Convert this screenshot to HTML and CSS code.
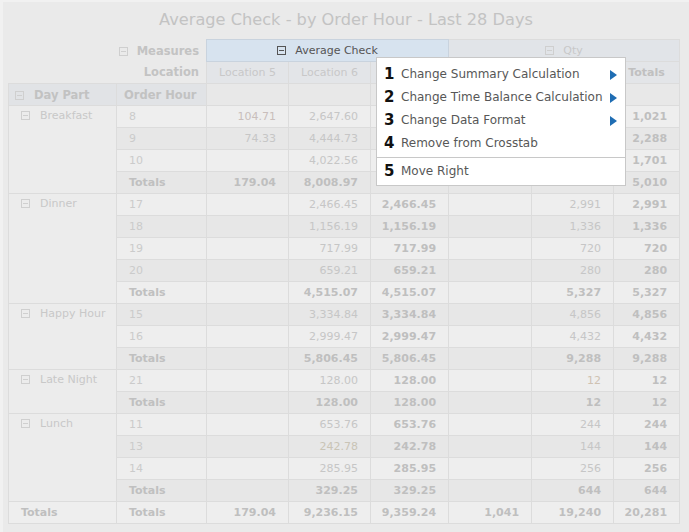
FILE: index.html
```html
<!DOCTYPE html>
<html>
<head>
<meta charset="utf-8">
<link rel="stylesheet" href="styles.css">
</head>
<body>
<div class="page">
  <div class="title">Average Check - by Order Hour - Last 28 Days</div>
  <table class="xt">
    <colgroup>
      <col class="c1"><col class="c2"><col class="c3"><col class="c4"><col class="c5"><col class="c6"><col class="c7"><col class="c8">
    </colgroup>
    <thead>
      <tr>
        <td colspan="2" class="axis"><span class="tog"><svg width="9" height="9" viewBox="0 0 9 9"><rect x="0.5" y="0.5" width="8" height="8" fill="none" stroke="currentColor"/><line x1="2" y1="4.5" x2="7" y2="4.5" stroke="currentColor"/></svg></span>Measures</td>
        <td colspan="3" class="m-avg"><span class="tog"><svg width="9" height="9" viewBox="0 0 9 9"><rect x="0.5" y="0.5" width="8" height="8" fill="none" stroke="currentColor"/><line x1="2" y1="4.5" x2="7" y2="4.5" stroke="currentColor"/></svg></span>Average Check</td>
        <td colspan="3" class="m-qty"><span class="tog"><svg width="9" height="9" viewBox="0 0 9 9"><rect x="0.5" y="0.5" width="8" height="8" fill="none" stroke="currentColor"/><line x1="2" y1="4.5" x2="7" y2="4.5" stroke="currentColor"/></svg></span>Qty</td>
      </tr>
      <tr>
        <td colspan="2" class="axis">Location</td>
        <td class="loc">Location 5</td>
        <td class="loc">Location 6</td>
        <td class="loc b"></td>
        <td class="loc"></td>
        <td class="loc"></td>
        <td class="loc b">Totals</td>
      </tr>
      <tr class="dimrow">
        <td class="dimh"><span class="tog"><svg width="9" height="9" viewBox="0 0 9 9"><rect x="0.5" y="0.5" width="8" height="8" fill="none" stroke="currentColor"/><line x1="2" y1="4.5" x2="7" y2="4.5" stroke="currentColor"/></svg></span>Day Part</td>
        <td class="dimh oh">Order Hour</td>
        <td></td><td></td><td></td><td></td><td></td><td></td>
      </tr>
    </thead>
    <tbody>
      <tr>
        <td rowspan="4" class="grp"><span class="tog"><svg width="9" height="9" viewBox="0 0 9 9"><rect x="0.5" y="0.5" width="8" height="8" fill="none" stroke="currentColor"/><line x1="2" y1="4.5" x2="7" y2="4.5" stroke="currentColor"/></svg></span>Breakfast</td>
        <td class="hr">8</td><td class="n warm">104.71</td><td class="n">2,647.60</td><td class="n b"></td><td class="n"></td><td class="n"></td><td class="n b">1,021</td>
      </tr>
      <tr><td class="hr">9</td><td class="n">74.33</td><td class="n">4,444.73</td><td class="n b"></td><td class="n"></td><td class="n"></td><td class="n b">2,288</td></tr>
      <tr><td class="hr">10</td><td class="n"></td><td class="n">4,022.56</td><td class="n b"></td><td class="n"></td><td class="n"></td><td class="n b">1,701</td></tr>
      <tr><td class="hr b">Totals</td><td class="n b">179.04</td><td class="n b">8,008.97</td><td class="n b"></td><td class="n b"></td><td class="n b"></td><td class="n b">5,010</td></tr>

      <tr>
        <td rowspan="5" class="grp"><span class="tog"><svg width="9" height="9" viewBox="0 0 9 9"><rect x="0.5" y="0.5" width="8" height="8" fill="none" stroke="currentColor"/><line x1="2" y1="4.5" x2="7" y2="4.5" stroke="currentColor"/></svg></span>Dinner</td>
        <td class="hr">17</td><td class="n"></td><td class="n">2,466.45</td><td class="n b">2,466.45</td><td class="n"></td><td class="n">2,991</td><td class="n b">2,991</td>
      </tr>
      <tr><td class="hr">18</td><td class="n"></td><td class="n">1,156.19</td><td class="n b">1,156.19</td><td class="n"></td><td class="n">1,336</td><td class="n b">1,336</td></tr>
      <tr><td class="hr">19</td><td class="n"></td><td class="n">717.99</td><td class="n b">717.99</td><td class="n"></td><td class="n">720</td><td class="n b">720</td></tr>
      <tr><td class="hr">20</td><td class="n"></td><td class="n">659.21</td><td class="n b">659.21</td><td class="n"></td><td class="n">280</td><td class="n b">280</td></tr>
      <tr><td class="hr b">Totals</td><td class="n"></td><td class="n b">4,515.07</td><td class="n b">4,515.07</td><td class="n"></td><td class="n b">5,327</td><td class="n b">5,327</td></tr>

      <tr>
        <td rowspan="3" class="grp"><span class="tog"><svg width="9" height="9" viewBox="0 0 9 9"><rect x="0.5" y="0.5" width="8" height="8" fill="none" stroke="currentColor"/><line x1="2" y1="4.5" x2="7" y2="4.5" stroke="currentColor"/></svg></span>Happy Hour</td>
        <td class="hr">15</td><td class="n"></td><td class="n">3,334.84</td><td class="n b">3,334.84</td><td class="n"></td><td class="n">4,856</td><td class="n b">4,856</td>
      </tr>
      <tr><td class="hr">16</td><td class="n"></td><td class="n">2,999.47</td><td class="n b">2,999.47</td><td class="n"></td><td class="n">4,432</td><td class="n b">4,432</td></tr>
      <tr><td class="hr b">Totals</td><td class="n"></td><td class="n b">5,806.45</td><td class="n b">5,806.45</td><td class="n"></td><td class="n b">9,288</td><td class="n b">9,288</td></tr>

      <tr>
        <td rowspan="2" class="grp"><span class="tog"><svg width="9" height="9" viewBox="0 0 9 9"><rect x="0.5" y="0.5" width="8" height="8" fill="none" stroke="currentColor"/><line x1="2" y1="4.5" x2="7" y2="4.5" stroke="currentColor"/></svg></span>Late Night</td>
        <td class="hr">21</td><td class="n"></td><td class="n">128.00</td><td class="n b">128.00</td><td class="n"></td><td class="n orange">12</td><td class="n b">12</td>
      </tr>
      <tr><td class="hr b">Totals</td><td class="n"></td><td class="n b">128.00</td><td class="n b">128.00</td><td class="n"></td><td class="n b">12</td><td class="n b">12</td></tr>

      <tr>
        <td rowspan="4" class="grp"><span class="tog"><svg width="9" height="9" viewBox="0 0 9 9"><rect x="0.5" y="0.5" width="8" height="8" fill="none" stroke="currentColor"/><line x1="2" y1="4.5" x2="7" y2="4.5" stroke="currentColor"/></svg></span>Lunch</td>
        <td class="hr">11</td><td class="n"></td><td class="n">653.76</td><td class="n b">653.76</td><td class="n"></td><td class="n">244</td><td class="n b">244</td>
      </tr>
      <tr><td class="hr">13</td><td class="n"></td><td class="n yel">242.78</td><td class="n b">242.78</td><td class="n"></td><td class="n">144</td><td class="n b">144</td></tr>
      <tr><td class="hr">14</td><td class="n"></td><td class="n">285.95</td><td class="n b">285.95</td><td class="n"></td><td class="n">256</td><td class="n b">256</td></tr>
      <tr><td class="hr b">Totals</td><td class="n"></td><td class="n b">329.25</td><td class="n b">329.25</td><td class="n"></td><td class="n b">644</td><td class="n b">644</td></tr>

      <tr class="grand">
        <td class="gt b">Totals</td>
        <td class="hr b">Totals</td><td class="n b">179.04</td><td class="n b">9,236.15</td><td class="n b">9,359.24</td><td class="n b">1,041</td><td class="n b">19,240</td><td class="n b">20,281</td>
      </tr>
    </tbody>
  </table>

  <div class="menu">
    <div class="item"><span class="num">1</span><span class="lbl">Change Summary Calculation</span><svg class="arr" width="7" height="10" viewBox="0 0 7 10"><polygon points="0,0 7,5 0,10" fill="currentColor"/></svg></div>
    <div class="item"><span class="num">2</span><span class="lbl">Change Time Balance Calculation</span><svg class="arr" width="7" height="10" viewBox="0 0 7 10"><polygon points="0,0 7,5 0,10" fill="currentColor"/></svg></div>
    <div class="item"><span class="num">3</span><span class="lbl">Change Data Format</span><svg class="arr" width="7" height="10" viewBox="0 0 7 10"><polygon points="0,0 7,5 0,10" fill="currentColor"/></svg></div>
    <div class="item"><span class="num">4</span><span class="lbl">Remove from Crosstab</span></div>
    <div class="sep"></div>
    <div class="item"><span class="num">5</span><span class="lbl">Move Right</span></div>
  </div>
</div>
</body>
</html>
```
FILE: styles.css
```css
html, body {
  margin: 0;
  padding: 0;
  background: #f1f1f1;
}
.page {
  position: relative;
  width: 686px;
  height: 530px;
  margin: 2px 0 0 3px;
  background: #eaeaea;
  font-family: "DejaVu Sans", Verdana, sans-serif;
  font-size: 11px;
  color: #c6c6c6;
  overflow: hidden;
}
.title {
  height: 37px;
  line-height: 35px;
  text-align: center;
  font-size: 16.2px;
  color: #c3c3c3;
}
.xt {
  border-collapse: collapse;
  table-layout: fixed;
  width: 671px;
  margin-left: 5px;
}
.c1 { width: 108px; }
.c2 { width: 90px; }
.c3 { width: 82px; }
.c4 { width: 82px; }
.c5 { width: 78px; }
.c6 { width: 83px; }
.c7 { width: 82px; }
.c8 { width: 66px; }
.xt td {
  border: 1px solid #dcdcdc;
  padding: 0;
  height: 21px;
  line-height: 20px;
  white-space: nowrap;
  overflow: hidden;
}
.b { font-weight: bold; color: #bfbfbf; }
.tog {
  display: inline-block;
  width: 9px;
  height: 9px;
  margin-right: 10px;
  vertical-align: -1px;
  color: #cfcfcf;
}
.tog svg { display: block; }
.xt td.axis {
  border: none;
  background: transparent;
  text-align: right;
  padding-right: 7px;
  font-weight: bold;
  color: #c3c3c3;
  font-size: 11.5px;
}
.axis .tog { margin-right: 9px; }
.xt td.m-avg {
  background: #d7e3ef;
  border-color: #c9d3de;
  text-align: center;
  color: #555;
}
.m-avg .tog { color: #555; margin-right: 9px; }
.xt td.m-qty {
  background: #e1e4e8;
  text-align: center;
  color: #c8c8c8;
}
.m-qty .tog { margin-right: 9px; }
.xt td.loc {
  background: #e3e5e8;
  text-align: center;
  color: #c8c8c8;
}
.xt td.loc.b { color: #c0c0c0; }
.dimrow td { background: #e8e8e8; }
.xt td.dimh {
  background: #e1e3e6;
  font-weight: bold;
  color: #c2c2c2;
  padding-left: 6px;
  font-size: 11.5px;
}
.xt td.oh { padding-left: 7px; }
tbody tr:nth-child(odd) td { background: #eeeeee; }
tbody tr:nth-child(even) td { background: #e7e7e7; }
.xt tbody td.grp {
  background: #ececec;
  vertical-align: top;
  padding-left: 12px;
  color: #c8c8c8;
}
.xt td.hr { padding-left: 12px; color: #cbcbcb; }
.xt td.hr.b { color: #c0c0c0; }
.xt td.gt { padding-left: 12px; }
.xt td.n { text-align: right; padding-right: 12px; }
.xt td.warm { color: #c9bebb; }
.xt td.yel { color: #c9c4b6; }
.xt td.orange { color: #cfc2b2; }

.menu {
  position: absolute;
  left: 373px;
  top: 55px;
  width: 248px;
  padding: 4px 0 3px;
  background: #ffffff;
  border: 1px solid #c8c8c8;
}
.item {
  display: flex;
  align-items: center;
  height: 23px;
  padding: 0 8px 0 7px;
  font-size: 12px;
  color: #575757;
}
.num {
  width: 17px;
  font-size: 15px;
  font-weight: bold;
  color: #111;
}
.lbl { flex: 1; }
.arr { color: #1f6db3; display: block; margin-top: 2px; }
.sep {
  border-top: 1px solid #c8c8c8;
  margin: 3px 0 1px;
}
```
